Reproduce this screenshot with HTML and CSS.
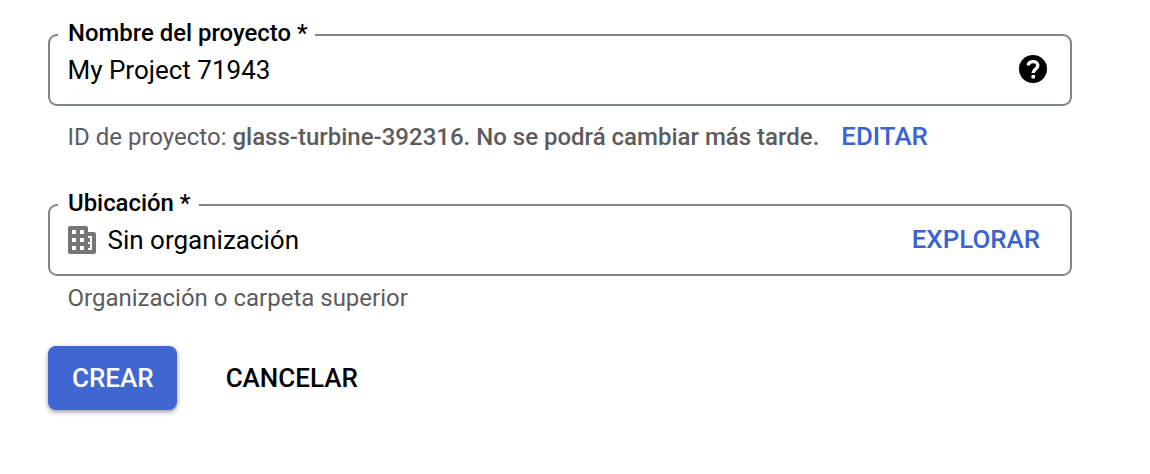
FILE: index.html
```html
<!DOCTYPE html>
<html lang="es">
<head>
<meta charset="utf-8">
<title>Nuevo proyecto</title>
<link rel="stylesheet" href="styles.css">
</head>
<body>
<form class="form">
  <fieldset class="field">
    <legend class="label">Nombre del proyecto *</legend>
    <span class="value">My Project 71943</span>
    <svg class="help" viewBox="0 0 28 28"><circle cx="14" cy="14" r="14"/><path class="mark" d="M9.300 10.600C9.300 8 11.300 6.600 14 6.600s4.800 1.500 4.800 4c0 3.300-4.600 3.500-4.600 7.400"/><path class="dot" d="M12.500 20h3.500v3.500h-3.500z"/></svg>
  </fieldset>
  <p class="hint hint-id"><span class="hint-text">ID de proyecto: <b class="strong">glass-turbine-392316. No se podrá cambiar más tarde.</b></span><a class="link">EDITAR</a></p>
  <fieldset class="field">
    <legend class="label label-wide">Ubicación *</legend>
    <svg class="org" viewBox="0 0 28 28"><path fill-rule="evenodd" d="M2 0h16q2 0 2 2v4h6q2 0 2 2v18q0 2-2 2H2q-2 0-2-2V2Q0 0 2 0zM4 4v4h4V4zM12 4v4h4V4zM4 12v4h4v-4zM12 12v4h4v-4zM4 20v4h4v-4zM12 20v4h4v-4zM20 10h4v14h-4v-2h2v-4h-2v-2h2v-4h-2z"/></svg>
    <span class="value">Sin organización</span>
    <a class="link browse">EXPLORAR</a>
  </fieldset>
  <p class="hint hint-parent">Organización o carpeta superior</p>
  <div class="actions">
    <button type="button" class="button primary">CREAR</button>
    <button type="button" class="button">CANCELAR</button>
  </div>
</form>
</body>
</html>
```
FILE: styles.css
```css
body { margin: 0; background: #fff; font-family: Roboto, sans-serif; color: #000; }
.form { width: 1024px; padding: 21px 0 0 48px; }
.field { box-sizing: border-box; display: flex; align-items: center; height: 85px; margin: 0; padding: 0 23px 11px 18px; border: 2px solid #808589; border-radius: 9px; min-width: 0; }
.label { height: 28px; margin-left: -10px; padding: 0 7px 0 10px; font-size: 23.900px; line-height: 24px; font-weight: 500; }
.label-wide { padding-right: 9px; }
.value { margin: 0 0 2px -0.500px; font-size: 26px; line-height: 30px; }
.help { width: 28px; height: 28px; margin: 0 0 4px auto; }
.mark { fill: none; stroke: #fff; stroke-width: 3.400px; }
.dot { fill: #fff; }
.org { width: 28px; height: 28px; margin: 0 12px 2px 0; fill: #757575; }
.link { color: #3c64d0; font-size: 25.900px; line-height: 30px; font-weight: 500; }
.browse { margin: 0 7px 4px auto; }
.hint { margin: 0; padding-left: 19.500px; color: #5c5c5e; font-size: 24px; line-height: 28px; }
.hint-id { display: flex; align-items: center; gap: 22px; height: 60px; margin-bottom: 25px; }
.hint-text { padding-top: 2px; }
.hint-parent { padding-top: 8px; }
.strong { font-weight: 500; }
.actions { display: flex; gap: 25px; margin-top: 34px; padding-bottom: 12px; }
.button { height: 64px; padding: 0 24px; border: 0; border-radius: 8px; background: transparent; color: #000; font: 500 26px Roboto, sans-serif; }
.primary { padding: 0 23px 0 24px; background: #3f66d1; color: #fff; box-shadow: 0 2px 5px rgba(0,0,0,.4); }
```
